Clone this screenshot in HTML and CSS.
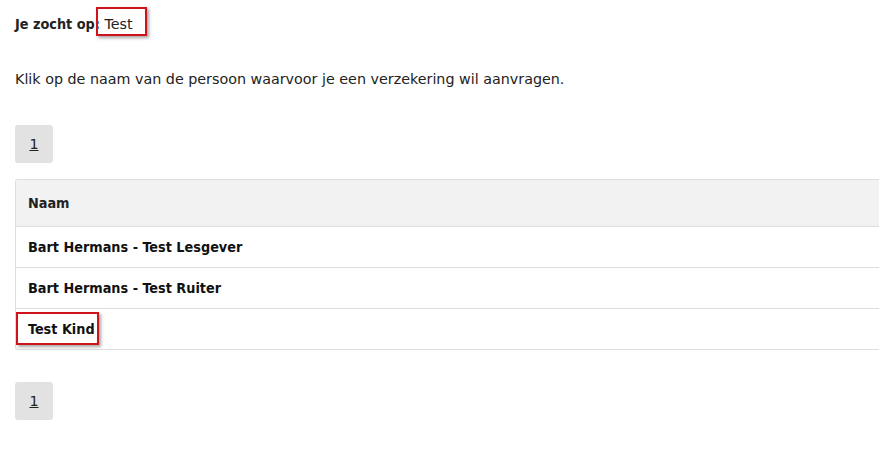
FILE: index.html
```html
<!doctype html>
<html>
<head>
    <title>Verzekering aanvragen</title>
    <meta charset="utf-8">
    <link rel="stylesheet" href="styles.css">
</head>
<body>
    <div id="page">
        <p class="search-info"><b>Je zocht op:</b> Test</p>
        <p class="intro">Klik op de naam van de persoon waarvoor je een verzekering wil aanvragen.</p>

        <div class="pager">
            <a href="#" class="page-btn">1</a>
        </div>

        <div class="table-wrap">
            <table class="persons">
                <thead>
                    <tr><th>Naam</th></tr>
                </thead>
                <tbody>
                    <tr><td><a href="#">Bart Hermans - Test Lesgever</a></td></tr>
                    <tr><td><a href="#">Bart Hermans - Test Ruiter</a></td></tr>
                    <tr><td><a href="#">Test Kind</a></td></tr>
                </tbody>
            </table>
        </div>

        <div class="pager pager-bottom">
            <a href="#" class="page-btn">1</a>
        </div>
    </div>

    <!-- annotatie kaders -->
    <div class="mark mark-search"></div>
    <div class="mark mark-kind"></div>
</body>
</html>
```

FILE: styles.css
```css
body {
    margin: 0;
    font-family: "DejaVu Sans", sans-serif;
    font-size: 14.3px;
    color: #222;
    background: #fff;
    overflow: hidden;
}

b,
th,
.persons td a {
    font-family: "DejaVu Sans Condensed", "DejaVu Sans", sans-serif;
}

#page {
    padding: 0 0 0 15px;
}

.search-info {
    margin: 0;
    padding-top: 15px;
    line-height: 18px;
}

.intro {
    margin: 0;
    padding-top: 37px;
    line-height: 18px;
}

.pager {
    display: flex;
    padding-top: 37px;
}

.pager-bottom {
    padding-top: 32px;
}

.page-btn {
    display: flex;
    align-items: center;
    justify-content: center;
    width: 38px;
    height: 38px;
    background: #e2e2e2;
    border-radius: 3px;
    color: #222;
    text-decoration: underline;
}

.table-wrap {
    margin-top: 16px;
    width: 900px;
    border: 1px solid #ddd;
    border-right: none;
    border-radius: 3px 0 0 3px;
}

.persons {
    width: 100%;
    border-collapse: collapse;
}

.persons th {
    text-align: left;
    height: 46px;
    padding: 0 12px;
    background: #f2f2f2;
    font-weight: bold;
}

.persons td {
    height: 40px;
    padding: 0 12px;
    border-top: 1px solid #ddd;
}

.persons td a {
    color: #111;
    text-decoration: none;
    font-weight: 600;
}

.mark {
    position: absolute;
    border: 2px solid #d0121b;
    box-shadow: 2px 2px 3px rgba(0, 0, 0, 0.35);
}

.mark-search {
    left: 96px;
    top: 7px;
    width: 47px;
    height: 25px;
}

.mark-kind {
    left: 16px;
    top: 312px;
    width: 79px;
    height: 29px;
}
```
